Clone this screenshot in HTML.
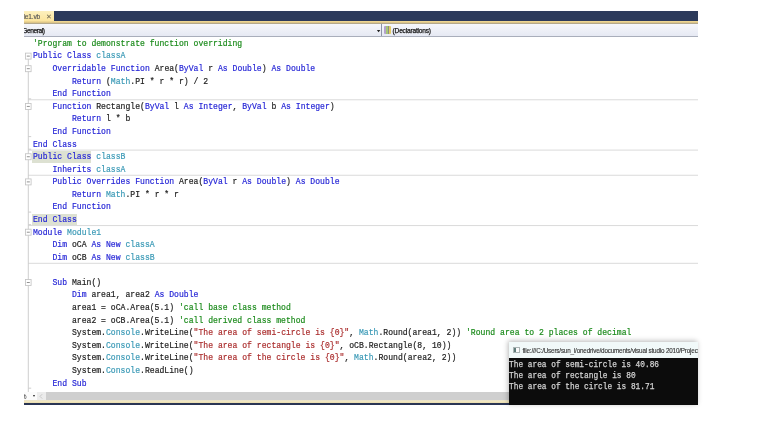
<!DOCTYPE html>
<html>
<head>
<meta charset="utf-8">
<title>Module1.vb</title>
<style>
html,body{margin:0;padding:0;background:#fff;}
body{width:768px;height:433px;overflow:hidden;position:relative;font-family:"Liberation Sans",sans-serif;}
#win{position:absolute;left:24px;top:11px;width:674px;height:394px;overflow:hidden;background:#fff;}
#tabbar{position:absolute;left:0;top:0;width:674px;height:10px;background:#2c3a5b;}
#tab{position:absolute;left:0;top:0;width:29.5px;height:10.5px;background:linear-gradient(#fdf0be,#fbe39a);overflow:hidden;}
#tab span{position:absolute;left:-0.6px;top:1.6px;font-size:6.6px;color:#585858;white-space:nowrap;letter-spacing:-0.15px;filter:blur(0.35px);-webkit-text-stroke-width:0.15px;}
#tab b{position:absolute;left:21.6px;top:0.9px;font-size:7.2px;color:#6b6450;font-weight:normal;filter:blur(0.35px);}
#yline{position:absolute;left:0;top:10px;width:674px;height:3px;background:linear-gradient(#f2dc98 0%,#e6cc88 45%,#b6a98a 70%,#b0a890 100%);}
#ddbar{position:absolute;left:0;top:13px;width:674px;height:12px;background:linear-gradient(#f6f7fb,#e6e9f3);border-bottom:1.5px solid #a9aebb;}
#ddbar .t1{position:absolute;left:-1.8px;top:2.6px;font-size:6.6px;color:#161616;white-space:nowrap;letter-spacing:-0.42px;filter:blur(0.35px);-webkit-text-stroke-width:0.25px;}
#ddbar .t2{position:absolute;left:368.6px;top:2.6px;font-size:6.6px;color:#161616;white-space:nowrap;letter-spacing:-0.2px;filter:blur(0.35px);-webkit-text-stroke-width:0.25px;}
#ddbar .dv{position:absolute;left:357px;top:0;width:1px;height:12px;background:#8e95a8;}
#ddbar .ar{position:absolute;left:351px;top:4px;width:7px;height:6px;}
#ddbar .ic{position:absolute;left:359.5px;top:2px;width:7.5px;height:8px;background:linear-gradient(90deg,#b4a2cc 0 28%,#8f8f80 28% 34%,#a4c678 34% 60%,#8f8f80 60% 66%,#e2ca68 66% 100%);border-radius:1px;filter:blur(0.3px);}
#code{position:absolute;left:0;top:0;width:768px;height:433px;font-family:"Liberation Mono",monospace;font-size:9.6px;color:#202020;}
.ln{position:absolute;left:32.6px;height:12.578px;line-height:12.578px;white-space:pre;transform-origin:0 0;transform:scaleX(0.845);}
.k{color:#2424d6}.t{color:#3898b5}.s{color:#aa2c2c}.c{color:#1a8a1a}
.hl{position:absolute;background:#dde1d2;}
#ol{position:absolute;left:0;top:0;filter:blur(0.3px);}
#txt{position:absolute;left:0;top:0;width:768px;height:433px;filter:blur(0.5px);-webkit-text-stroke-width:0.2px;}
.sep{position:absolute;left:28px;width:670px;height:1px;background:#dedede;}
.vl{position:absolute;left:28px;width:1px;background:#c6c6c6;}
.ob{position:absolute;left:25.5px;width:5px;height:5.5px;border:0.8px solid #9a9a9a;background:#fff;box-sizing:border-box;}
.ob i{position:absolute;left:1px;top:1.6px;width:2.2px;height:0.9px;background:#666;}
.tk{position:absolute;left:28px;width:3px;height:1px;background:#c6c6c6;}
#sb{position:absolute;left:24px;top:392px;width:674px;height:8.6px;background:#cfcfcf;overflow:hidden;}
#sb .z{position:absolute;left:0;top:0;width:13px;height:9px;background:#fbfbfb;}
#sb .z span{position:absolute;left:-3.2px;top:1px;font-size:6.5px;color:#222;filter:blur(0.3px);}
#sb .z i{position:absolute;left:8.6px;top:3.4px;width:0;height:0;border-left:1.7px solid transparent;border-right:1.7px solid transparent;border-top:2.2px solid #222;}
#sb .lb{position:absolute;left:13px;top:0;width:8.6px;height:9px;background:#ececec;}
#sb .lb svg{position:absolute;left:0;top:0;}
#by{position:absolute;left:24px;top:400.3px;width:674px;height:3px;background:linear-gradient(#e6e0cc,#f3e9c4 40%,#e9dcae);}
#bd{position:absolute;left:24px;top:403.1px;width:674px;height:2.2px;background:#2a3554;}
#con{position:absolute;left:509px;top:342px;width:189px;height:63px;background:#0c0c0c;box-shadow:-1px -1px 5px rgba(0,0,0,0.28);overflow:hidden;}
#con .tb{position:absolute;left:0;top:0;width:189px;height:16.2px;background:#f1f9f9;}
#con .tb span{position:absolute;left:13.5px;top:5px;font-size:6.3px;color:#333;white-space:nowrap;letter-spacing:-0.17px;filter:blur(0.3px);-webkit-text-stroke-width:0.12px;}
#con .tb i{position:absolute;left:3.6px;top:4.6px;width:7px;height:6px;background:linear-gradient(90deg,#5f7c7a 0 50%,#fbfbfb 50% 100%);border:0.6px solid #aab4b4;box-sizing:border-box;filter:blur(0.3px);}
#con .tx{position:absolute;left:0;font-family:"Liberation Mono",monospace;font-size:8.8px;color:#d4d4d4;white-space:pre;transform-origin:0 0;transform:scaleX(0.888);height:10.8px;line-height:10.8px;filter:blur(0.35px);-webkit-text-stroke-width:0.25px;}
</style>
</head>
<body>
<div id="win">
  <div id="tabbar"></div>
  <div id="tab"><span>le1.vb</span><b>&#10005;</b></div>
  <div id="yline"></div>
  <div id="ddbar"><span class="t1">General)</span><svg class="ar" viewBox="0 0 7 6"><path d="M1.9 1.9 L5.3 1.9 L3.6 4.3 Z" fill="#222"/></svg><div class="dv"></div><div class="ic"></div><span class="t2">(Declarations)</span></div>
</div>
<div id="code">
<div class="hl" style="top:151.25px;left:32.20px;width:59.00px;height:11.28px"></div>
<div class="hl" style="top:214.14px;left:32.20px;width:44.40px;height:11.28px"></div>

<svg id="ol" width="768" height="433" viewBox="0 0 768 433"><line x1="28.3" y1="99.79" x2="698" y2="99.79" stroke="#dadada" stroke-width="1"/><line x1="28.3" y1="150.10" x2="698" y2="150.10" stroke="#dadada" stroke-width="1"/><line x1="28.3" y1="175.26" x2="698" y2="175.26" stroke="#dadada" stroke-width="1"/><line x1="28.3" y1="225.57" x2="698" y2="225.57" stroke="#dadada" stroke-width="1"/><line x1="28.3" y1="263.30" x2="698" y2="263.30" stroke="#dadada" stroke-width="1"/><line x1="28.3" y1="55.77" x2="28.3" y2="392" stroke="#c8c8c8" stroke-width="0.9"/><line x1="28.3" y1="98.89" x2="31.2" y2="98.89" stroke="#c8c8c8" stroke-width="0.9"/><line x1="28.3" y1="136.62" x2="31.2" y2="136.62" stroke="#c8c8c8" stroke-width="0.9"/><line x1="28.3" y1="149.20" x2="31.2" y2="149.20" stroke="#c8c8c8" stroke-width="0.9"/><line x1="28.3" y1="212.09" x2="31.2" y2="212.09" stroke="#c8c8c8" stroke-width="0.9"/><line x1="28.3" y1="224.67" x2="31.2" y2="224.67" stroke="#c8c8c8" stroke-width="0.9"/><line x1="28.3" y1="388.18" x2="31.2" y2="388.18" stroke="#c8c8c8" stroke-width="0.9"/><rect x="25.50" y="53.12" width="5.6" height="6.0" fill="#fff" stroke="#c4c4c4" stroke-width="0.85"/><line x1="26.80" y1="56.12" x2="29.80" y2="56.12" stroke="#8c8c8c" stroke-width="0.95"/><rect x="25.50" y="65.69" width="5.6" height="6.0" fill="#fff" stroke="#c4c4c4" stroke-width="0.85"/><line x1="26.80" y1="68.69" x2="29.80" y2="68.69" stroke="#8c8c8c" stroke-width="0.95"/><rect x="25.50" y="103.43" width="5.6" height="6.0" fill="#fff" stroke="#c4c4c4" stroke-width="0.85"/><line x1="26.80" y1="106.43" x2="29.80" y2="106.43" stroke="#8c8c8c" stroke-width="0.95"/><rect x="25.50" y="153.74" width="5.6" height="6.0" fill="#fff" stroke="#c4c4c4" stroke-width="0.85"/><line x1="26.80" y1="156.74" x2="29.80" y2="156.74" stroke="#8c8c8c" stroke-width="0.95"/><rect x="25.50" y="178.90" width="5.6" height="6.0" fill="#fff" stroke="#c4c4c4" stroke-width="0.85"/><line x1="26.80" y1="181.90" x2="29.80" y2="181.90" stroke="#8c8c8c" stroke-width="0.95"/><rect x="25.50" y="229.21" width="5.6" height="6.0" fill="#fff" stroke="#c4c4c4" stroke-width="0.85"/><line x1="26.80" y1="232.21" x2="29.80" y2="232.21" stroke="#8c8c8c" stroke-width="0.95"/><rect x="25.50" y="279.52" width="5.6" height="6.0" fill="#fff" stroke="#c4c4c4" stroke-width="0.85"/><line x1="26.80" y1="282.52" x2="29.80" y2="282.52" stroke="#8c8c8c" stroke-width="0.95"/></svg>
<div id="txt">
<div class="ln" style="top:37.90px; left:33.40px;"><span class="c">'Program to demonstrate function overriding</span></div>
<div class="ln" style="top:50.48px;"><span class="k">Public</span> <span class="k">Class</span> <span class="t">classA</span></div>
<div class="ln" style="top:63.06px;">    <span class="k">Overridable</span> <span class="k">Function</span> Area(<span class="k">ByVal</span> r <span class="k">As</span> <span class="k">Double</span>) <span class="k">As</span> <span class="k">Double</span></div>
<div class="ln" style="top:75.63px;">        <span class="k">Return</span> (<span class="t">Math</span>.PI * r * r) / 2</div>
<div class="ln" style="top:88.21px;">    <span class="k">End</span> <span class="k">Function</span></div>
<div class="ln" style="top:100.79px;">    <span class="k">Function</span> Rectangle(<span class="k">ByVal</span> l <span class="k">As</span> <span class="k">Integer</span>, <span class="k">ByVal</span> b <span class="k">As</span> <span class="k">Integer</span>)</div>
<div class="ln" style="top:113.37px;">        <span class="k">Return</span> l * b</div>
<div class="ln" style="top:125.95px;">    <span class="k">End</span> <span class="k">Function</span></div>
<div class="ln" style="top:138.52px;"><span class="k">End</span> <span class="k">Class</span></div>
<div class="ln" style="top:151.10px;"><span class="k">Public</span> <span class="k">Class</span> <span class="t">classB</span></div>
<div class="ln" style="top:163.68px;">    <span class="k">Inherits</span> <span class="t">classA</span></div>
<div class="ln" style="top:176.26px;">    <span class="k">Public</span> <span class="k">Overrides</span> <span class="k">Function</span> Area(<span class="k">ByVal</span> r <span class="k">As</span> <span class="k">Double</span>) <span class="k">As</span> <span class="k">Double</span></div>
<div class="ln" style="top:188.84px;">        <span class="k">Return</span> <span class="t">Math</span>.PI * r * r</div>
<div class="ln" style="top:201.41px;">    <span class="k">End</span> <span class="k">Function</span></div>
<div class="ln" style="top:213.99px;"><span class="k">End</span> <span class="k">Class</span></div>
<div class="ln" style="top:226.57px;"><span class="k">Module</span> <span class="t">Module1</span></div>
<div class="ln" style="top:239.15px;">    <span class="k">Dim</span> oCA <span class="k">As</span> <span class="k">New</span> <span class="t">classA</span></div>
<div class="ln" style="top:251.73px;">    <span class="k">Dim</span> oCB <span class="k">As</span> <span class="k">New</span> <span class="t">classB</span></div>
<div class="ln" style="top:276.88px;">    <span class="k">Sub</span> Main()</div>
<div class="ln" style="top:289.46px;">        <span class="k">Dim</span> area1, area2 <span class="k">As</span> <span class="k">Double</span></div>
<div class="ln" style="top:302.04px;">        area1 = oCA.Area(5.1) <span class="c">'call base class method</span></div>
<div class="ln" style="top:314.62px;">        area2 = oCB.Area(5.1) <span class="c">'call derived class method</span></div>
<div class="ln" style="top:327.19px;">        System.<span class="t">Console</span>.WriteLine(<span class="s">"The area of semi-circle is {0}"</span>, <span class="t">Math</span>.Round(area1, 2)) <span class="c">'Round area to 2 places of decimal</span></div>
<div class="ln" style="top:339.77px;">        System.<span class="t">Console</span>.WriteLine(<span class="s">"The area of rectangle is {0}"</span>, oCB.Rectangle(8, 10))</div>
<div class="ln" style="top:352.35px;">        System.<span class="t">Console</span>.WriteLine(<span class="s">"The area of the circle is {0}"</span>, <span class="t">Math</span>.Round(area2, 2))</div>
<div class="ln" style="top:364.93px;">        System.<span class="t">Console</span>.ReadLine()</div>
<div class="ln" style="top:377.51px;">    <span class="k">End</span> <span class="k">Sub</span></div>
</div>
</div>
<div id="sb"><div class="z"><span>%</span><i></i></div><div class="lb"><svg width="9" height="9" viewBox="0 0 9 9"><path d="M5.2 2.2 L3 4.4 L5.2 6.6" fill="none" stroke="#c4c4c4" stroke-width="0.9"/></svg></div></div>
<div id="by"></div>
<div id="bd"></div>
<div id="con">
  <div class="tb"><i></i><span>file:///C:/Users/sun_i/onedrive/documents/visual studio 2010/Projects/ConsoleApplication1</span></div>
  <div class="tx" style="top:17.7px">The area of semi-circle is 40.86</div>
  <div class="tx" style="top:28.7px">The area of rectangle is 80</div>
  <div class="tx" style="top:39.8px">The area of the circle is 81.71</div>
</div>
</body>
</html>
